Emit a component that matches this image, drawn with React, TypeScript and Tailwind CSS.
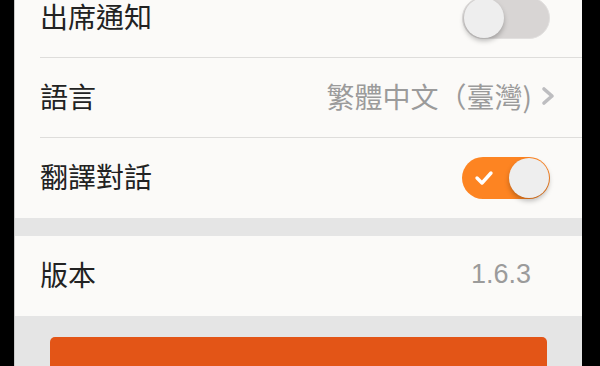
import React, { useState } from 'react';

const cjk = { fontFamily: '"Noto Sans CJK TC", "Noto Sans", sans-serif' };

const Toggle: React.FC<{ on: boolean; onChange: () => void }> = ({ on, onChange }) => (
    <button
        onClick={onChange}
        className={`w-[88px] h-[42px] rounded-full shrink-0 flex items-center p-[1px] ${on ? 'bg-[#fd8422] justify-between pl-[12px]' : 'bg-[#d8d5d4] border border-[#e2e0df] justify-start p-0'}`}
        aria-pressed={on}
    >
        {on && (
            <svg width="20" height="18" viewBox="0 0 20 18" fill="none">
                <polyline points="3,9 8,14 17,4" stroke="#ffffff" strokeWidth="3.4" strokeLinecap="round" strokeLinejoin="round" />
            </svg>
        )}
        <span className="w-[40px] h-[40px] rounded-full bg-[#eeeeee] shadow-[0_3px_5px_rgba(0,0,0,0.25)]" />
    </button>
);

const Row: React.FC<{ label: string; divider?: boolean; children?: React.ReactNode }> = ({ label, divider, children }) => (
    <div className="pl-[25px]">
        <div className={`h-[80px] flex items-center justify-between ${divider ? 'border-b border-[#dedddb]' : ''}`}>
            <span className="pb-[4px] text-[28px] text-[#222222] leading-none" style={cjk}>{label}</span>
            {children}
        </div>
    </div>
);

export default function App() {
    const [notify, setNotify] = useState(false);
    const [translate, setTranslate] = useState(true);

    return (
        <div className="w-[600px] h-[366px] bg-black flex overflow-hidden">
            <div className="ml-[14px] w-[568px] h-full border-l border-[#c9c9c9] bg-[#e5e5e5] overflow-hidden">
                <div className="-mt-[22px] bg-[#fbfaf8]">
                    <Row label="出席通知" divider>
                        <div className="pr-[32px]">
                            <Toggle on={notify} onChange={() => setNotify(!notify)} />
                        </div>
                    </Row>
                    <Row label="語言" divider>
                        <div className="pb-[4px] flex items-center gap-[9px] pr-[27px]">
                            <span className="text-[28px] text-[#9b9b9b] leading-none" style={cjk}>繁體中文（臺灣)</span>
                            <svg width="14" height="20" viewBox="0 0 14 20" fill="none">
                                <polyline points="3,3 11,10 3,17" stroke="#bdbdc0" strokeWidth="3.6" strokeLinecap="round" strokeLinejoin="round" />
                            </svg>
                        </div>
                    </Row>
                    <Row label="翻譯對話">
                        <div className="pr-[32px]">
                            <Toggle on={translate} onChange={() => setTranslate(!translate)} />
                        </div>
                    </Row>
                </div>
                <div className="h-[18px]" />
                <div className="bg-[#fbfaf8]">
                    <Row label="版本">
                        <span className="pb-[4px] pr-[51px] text-[27px] text-[#9b9b9b] leading-none" style={{ fontFamily: '"Liberation Sans", Arial, sans-serif' }}>1.6.3</span>
                    </Row>
                </div>
                <div className="px-[35px] pt-[21px]">
                    <button className="w-full h-[56px] rounded-[5px] bg-[#e35517]" />
                </div>
            </div>
        </div>
    );
}
